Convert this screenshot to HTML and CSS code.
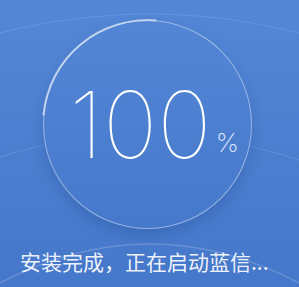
FILE: index.html
```html
<!DOCTYPE html>
<html lang="zh-CN">
<head>
  <meta charset="UTF-8" />
  <meta name="viewport" content="width=device-width, initial-scale=1.0"/>
  <title>蓝信 - 安装</title>
  <link rel="stylesheet" href="styles.css">
</head>
<body>
  <div class="stage">
    <svg class="rings" width="299" height="287" viewBox="0 0 299 287">
      <path d="M0 33 Q 150 -5 299 33" />
      <path d="M0 157 Q 148 110 299 160" />
      <path class="bright" d="M0 283 Q 150 205 299 283" />
    </svg>

    <div class="dial">
      <div class="value">
        <span class="num">100</span>
        <span class="pct">%</span>
      </div>
    </div>

    <p class="status">安装完成，正在启动蓝信...</p>
  </div>
</body>
</html>
```

FILE: styles.css
```css
html, body {
  margin: 0;
  padding: 0;
}

body {
  width: 299px;
  height: 287px;
  overflow: hidden;
  background: linear-gradient(#5488d6, #4577ca);
  font-family: "Noto Sans CJK SC", "Noto Sans", sans-serif;
}

.stage {
  position: relative;
  width: 299px;
  height: 287px;
  padding-top: 20px;
  box-sizing: border-box;
}

.rings {
  position: absolute;
  left: 0;
  top: 0;
}

.rings path {
  fill: none;
  stroke: rgba(255, 255, 255, 0.12);
  stroke-width: 1.2;
}

.rings path.bright {
  stroke: rgba(255, 255, 255, 0.18);
  stroke-width: 1.6;
}

.dial {
  position: relative;
  width: 209px;
  height: 209px;
  margin-left: 43px;
  box-sizing: border-box;
  border-radius: 50%;
  border: 1.5px solid rgba(255, 255, 255, 0.42);
  background: linear-gradient(#5386d5, #4679cb);
  box-shadow: 0 6px 14px rgba(20, 50, 120, 0.22);
  display: flex;
  align-items: center;
  justify-content: center;
}

.dial::before {
  content: "";
  position: absolute;
  left: -2px;
  top: -2px;
  right: -2px;
  bottom: -2px;
  border-radius: 50%;
  border: 2px solid transparent;
  border-top-color: rgba(255, 255, 255, 0.55);
  transform: rotate(-40deg);
}

.value {
  display: flex;
  align-items: flex-end;
  color: #fff;
  padding-left: 13px;
}

.num {
  font-family: Inter, "Noto Sans", sans-serif;
  font-weight: 100;
  font-size: 92px;
  line-height: 1;
}

.pct {
  font-family: Inter, "Noto Sans", sans-serif;
  font-weight: 200;
  font-size: 26px;
  line-height: 1;
  margin-left: 4px;
  margin-bottom: 15px;
  color: rgba(255, 255, 255, 0.85);
}

.status {
  position: relative;
  margin: 17px 0 0 20px;
  font-size: 21px;
  line-height: 30px;
  color: rgba(255, 255, 255, 0.92);
  white-space: nowrap;
}
```
